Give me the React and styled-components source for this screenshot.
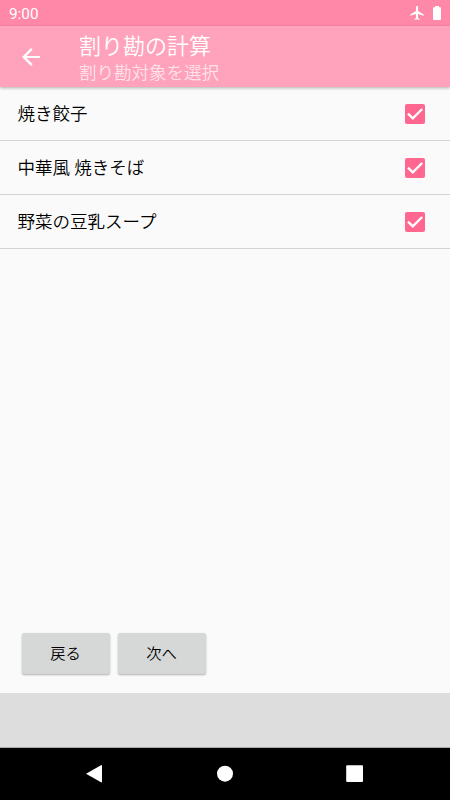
import React from "react";
import styled, { createGlobalStyle } from "styled-components";

const GlobalStyle = createGlobalStyle`
  *, *::before, *::after { box-sizing: border-box; }
  body { margin: 0; background: #fafafa; }
`;

const Screen = styled.div`
  width: 450px;
  height: 800px;
  display: flex;
  flex-direction: column;
  overflow: hidden;
  background: #fafafa;
  color: #000;
  font-family: Roboto, "Noto Sans CJK JP", sans-serif;
`;

const StatusBar = styled.div`
  flex: none;
  height: 26px;
  padding: 1px 9px 0 9px;
  display: flex;
  align-items: center;
  justify-content: space-between;
  background: #ff87a8;
  color: #fff;
  font-size: 15.3px;
`;

const StatusIcons = styled.div`
  padding-bottom: 1px;
  display: flex;
  align-items: center;
  gap: 9px;
  svg { display: block; }
`;

const AppBar = styled.header`
  flex: none;
  height: 61px;
  padding-left: 20.5px;
  display: flex;
  align-items: center;
  gap: 38.5px;
  background: #ffa3bc;
  box-shadow: 0 1px 3px rgba(0, 0, 0, 0.3);
  svg { display: block; }
`;

const BackButton = styled.button`
  width: 20px;
  height: 20px;
  padding: 0;
  border: 0;
  background: none;
`;

const Titles = styled.div`
  padding-top: 4px;
  display: flex;
  flex-direction: column;
  font-weight: 350;
`;

const Title = styled.h1`
  margin: 0;
  font-size: 22px;
  font-weight: inherit;
  line-height: 29px;
  color: #fff;
`;

const Subtitle = styled.p`
  margin: 0;
  font-size: 17.5px;
  line-height: 25px;
  color: rgba(255, 255, 255, 0.7);
`;

const List = styled.ul`
  margin: 0;
  padding: 0;
  flex: 1;
  list-style: none;
`;

const Row = styled.li`
  height: 53.9px;
  padding: 1px 25px 0 17.5px;
  display: flex;
  align-items: center;
  justify-content: space-between;
  border-bottom: 1px solid #d3d3d3;
  font-size: 17.5px;
  font-weight: 350;
  svg { display: block; }
`;

const DishName = styled.span`
  padding-bottom: 2.6px;
`;

const Actions = styled.div`
  flex: none;
  padding: 0 21.5px 19px;
  display: flex;
  gap: 8px;
`;

const Button = styled.button`
  width: 88px;
  height: 41px;
  padding: 0 0 4px;
  border: 0;
  border-radius: 2px;
  background: #d6d8d7;
  box-shadow: 0 1px 2px rgba(0, 0, 0, 0.3);
  color: #000;
  font: inherit;
  font-size: 15.3px;
  font-weight: 350;
`;

const AdSlot = styled.div`
  flex: none;
  height: 55px;
  background: #ddd;
  border-bottom: 1px solid #aaa;
`;

const NavBar = styled.nav`
  flex: none;
  height: 52px;
  background: #000;
  svg { display: block; }
`;

const dishes = ["焼き餃子", "中華風 焼きそば", "野菜の豆乳スープ"];

const CheckedBox = () => (
  <svg width="20" height="20" viewBox="0 0 20 20">
    <rect width="20" height="20" rx="2" fill="#ff6690" />
    <path d="M3 9.6l4.8 4.8L17.2 5" fill="none" stroke="#fff" strokeWidth="2.3" />
  </svg>
);

export default function App() {
  return (
    <Screen>
      <GlobalStyle />
      <StatusBar>
        <span>9:00</span>
        <StatusIcons>
          <svg width="14" height="14" viewBox="1.5 2 20 20">
            <path fill="#fff" d="M21 16v-2l-8-5V3.5c0-.83-.67-1.5-1.5-1.5S10 2.67 10 3.5V9l-8 5v2l8-2.5V19l-2 1.5V22l3.5-1 3.5 1v-1.5L13 19v-5.5l8 2.5z" />
          </svg>
          <svg width="8" height="14" viewBox="0 0 8 14">
            <path fill="#fff" d="M2 0h4v1.3h1a1 1 0 0 1 1 1V13a1 1 0 0 1-1 1H1a1 1 0 0 1-1-1V2.3a1 1 0 0 1 1-1h1z" />
          </svg>
        </StatusIcons>
      </StatusBar>
      <AppBar>
        <BackButton aria-label="戻る">
          <svg width="20" height="20" viewBox="3 3 18 18">
            <path fill="#fff" d="M20 11H7.83l5.59-5.59L12 4l-8 8 8 8 1.41-1.41L7.83 13H20z" />
          </svg>
        </BackButton>
        <Titles>
          <Title>割り勘の計算</Title>
          <Subtitle>割り勘対象を選択</Subtitle>
        </Titles>
      </AppBar>
      <List>
        {dishes.map((dish) => (
          <Row key={dish}>
            <DishName>{dish}</DishName>
            <CheckedBox />
          </Row>
        ))}
      </List>
      <Actions>
        <Button>戻る</Button>
        <Button>次へ</Button>
      </Actions>
      <AdSlot />
      <NavBar>
        <svg width="450" height="52" viewBox="0 0 450 52" fill="#fff">
          <path d="M86 25.7L101 17.2Q102 16.8 102 18V33.6Q102 34.8 101 34.2Z" />
          <circle cx="225" cy="25.7" r="8" />
          <rect x="346.2" y="17.2" width="16.8" height="16.8" rx="1" />
        </svg>
      </NavBar>
    </Screen>
  );
}
